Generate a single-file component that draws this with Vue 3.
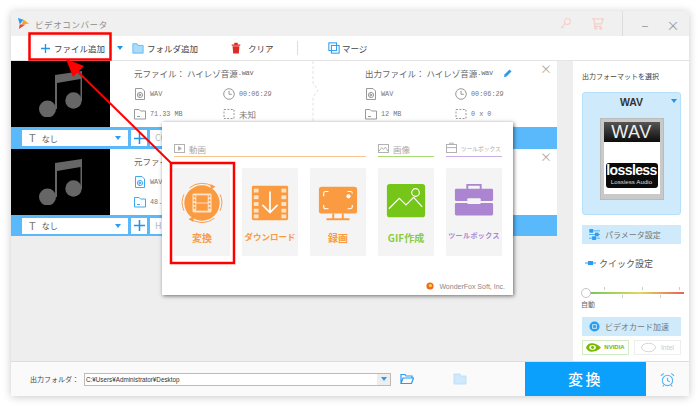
<template>
  <div class="page">
    <div class="window">
      <!-- title bar -->
      <div class="titlebar">
        <svg class="applogo" viewBox="0 0 14 14">
          <path d="M1 1 L7 3 L3 8 Z" fill="#2d9cf0" />
          <path d="M7 3 L13 7 L5 8 Z" fill="#f5a623" />
          <path d="M3 8 L9 8 L2 13 Z" fill="#e8432e" />
        </svg>
        <span class="apptitle">ビデオコンバータ</span>
        <span class="spring"></span>
        <svg class="tico" viewBox="0 0 14 14" fill="none" stroke="#f5cfc9" stroke-width="1.1">
          <circle cx="9" cy="4.8" r="3.2" />
          <path d="M6.8 7 L2 12 M3.5 10.5 L5 12" />
        </svg>
        <svg class="tico cart" viewBox="0 0 14 14" fill="none" stroke="#f5cfc9" stroke-width="1.4">
          <path d="M1 2 H13 L11.5 7.5 H4 L3 2 M4 7.5 V10 H11" />
          <circle cx="5" cy="12" r="1" />
          <circle cx="10.5" cy="12" r="1" />
        </svg>
        <span class="tsep"></span>
        <span class="winbtn">–</span>
        <span class="winbtn">×</span>
      </div>

      <!-- toolbar -->
      <div class="toolbar">
        <div class="tool addfile">
          <svg class="plus" viewBox="0 0 10 10"><path d="M5 0 V10 M0 5 H10" stroke="#1e96e8" stroke-width="1.5" /></svg>
          <span>ファイル追加</span>
        </div>
        <span class="caret toolcaret"></span>
        <div class="tool addfolder">
          <svg class="ticon" viewBox="0 0 14 14">
            <path d="M1 2 H6 L7 4 H13 V13 H1 Z" fill="#a8dcfa" stroke="#3eaaf0" stroke-width=".8" />
          </svg>
          <span>フォルダ追加</span>
        </div>
        <div class="tool clear">
          <svg class="ticon" viewBox="0 0 14 14">
            <path d="M2 3 H12 V4.5 H2 Z M5 1 H9 V3 H5 Z M3 5 H11 L10.3 13.5 H3.7 Z" fill="#dd2a22" />
          </svg>
          <span>クリア</span>
        </div>
        <span class="toolsep"></span>
        <div class="tool merge">
          <svg class="ticon" viewBox="0 0 14 14" fill="none" stroke="#2d9cf0" stroke-width="1.2">
            <rect x="1" y="1" width="9" height="9" />
            <rect x="4" y="4" width="9" height="9" />
          </svg>
          <span>マージ</span>
        </div>
      </div>

      <!-- main area -->
      <div class="main">
        <div class="files">
          <div v-for="(f, i) in files" :key="i" class="fileitem">
            <div class="filerow" :class="{ second: i === 1 }">
              <div class="thumb">
                <svg viewBox="0 0 43 46" class="note">
                  <path d="M16 4 L43 0 V30 H41.5 V8 L18 12 V38 H16 Z" fill="#666" />
                  <circle cx="8.5" cy="38" r="8.5" fill="#666" />
                  <circle cx="34.5" cy="29.5" r="8.2" fill="#666" />
                </svg>
              </div>
              <div class="src">
                <div class="fname"><span>元ファイル： ハイレゾ音源</span><span class="ext">.wav</span></div>
                <div class="meta">
                  <div class="cell first">
                    <svg class="mico" :class="{ on: i === 1 }" viewBox="0 0 12 12" fill="none" stroke="currentColor">
                      <path d="M1.5 .5 H8 L10.5 3 V11.5 H1.5 Z" />
                      <circle cx="6" cy="7" r="2.6" />
                      <path d="M5.2 5.8 L7.2 7 L5.2 8.2 Z" />
                    </svg>
                    <span>WAV</span>
                  </div>
                  <div class="cell">
                    <svg class="mico" viewBox="0 0 12 12" fill="none" stroke="currentColor">
                      <circle cx="6" cy="6" r="5.3" />
                      <path d="M6 2.8 V6.3 H8.8" />
                    </svg>
                    <span>00:06:29</span>
                  </div>
                  <div class="cell first">
                    <svg class="mico" :class="{ on: i === 1 }" viewBox="0 0 12 12" fill="none" stroke="currentColor">
                      <path d="M.5 1.5 H5 L6.5 3 H11.5 V11 H.5 Z" />
                      <path d="M3 8.5 H6" />
                    </svg>
                    <span>{{ f.size }}</span>
                  </div>
                  <div class="cell">
                    <svg class="mico" viewBox="0 0 12 12" fill="none" stroke="currentColor" stroke-dasharray="2 1.4">
                      <rect x="1" y="1.5" width="10" height="9" />
                    </svg>
                    <span class="cjk">未知</span>
                  </div>
                </div>
              </div>
              <div class="arrowcol">
                <svg viewBox="0 0 10 64" class="chev" fill="none" stroke="#e2e2e2">
                  <path d="M1 0 V22 L6 29 L1 36 V64" stroke-dasharray="3 2" />
                </svg>
              </div>
              <div class="out">
                <div class="fname">
                  <span>出力ファイル： ハイレゾ音源</span><span class="ext">.wav</span>
                  <svg class="pencil" viewBox="0 0 10 10"><path d="M1 9 L1.5 6.5 L6.5 1.5 L8.5 3.5 L3.5 8.5 Z" fill="#2a9df0" /></svg>
                </div>
                <div class="meta">
                  <div class="cell outfirst">
                    <svg class="mico" viewBox="0 0 12 12" fill="none" stroke="currentColor">
                      <path d="M1.5 .5 H8 L10.5 3 V11.5 H1.5 Z" />
                      <circle cx="6" cy="7" r="2.6" />
                      <path d="M5.2 5.8 L7.2 7 L5.2 8.2 Z" />
                    </svg>
                    <span>WAV</span>
                  </div>
                  <div class="cell">
                    <svg class="mico" viewBox="0 0 12 12" fill="none" stroke="currentColor">
                      <circle cx="6" cy="6" r="5.3" />
                      <path d="M6 2.8 V6.3 H8.8" />
                    </svg>
                    <span>00:06:29</span>
                  </div>
                  <div class="cell outfirst">
                    <svg class="mico" viewBox="0 0 12 12" fill="none" stroke="currentColor">
                      <path d="M.5 1.5 H5 L6.5 3 H11.5 V11 H.5 Z" />
                      <path d="M3 8.5 H6" />
                    </svg>
                    <span>12 MB</span>
                  </div>
                  <div class="cell">
                    <svg class="mico" viewBox="0 0 12 12" fill="none" stroke="currentColor" stroke-dasharray="2 1.4">
                      <rect x="1" y="1.5" width="10" height="9" />
                    </svg>
                    <span>0 x 0</span>
                  </div>
                </div>
              </div>
              <span class="rowclose">×</span>
            </div>
            <div class="blue" :class="{ short: i === 1 }">
              <div class="sel">
                <span class="tglyph">T</span>
                <span class="none">なし</span>
                <span class="caret selcaret"></span>
              </div>
              <div class="plusbox">
                <svg viewBox="0 0 10 10"><path d="M5 0 V10 M0 5 H10" stroke="#1e96e8" stroke-width="1.4" /></svg>
              </div>
              <div class="ccbox">{{ f.tag }}</div>
            </div>
          </div>
        </div>

        <!-- right panel -->
        <div class="side">
          <div class="sidetitle">出力フォーマットを選択</div>
          <div class="format">
            <div class="fmtname">WAV<span class="caret fmtcaret"></span></div>
            <div class="disk">
              <div class="diskinner">
                <div class="diskhead">WAV</div>
                <div class="badge">
                  <span class="badgebig">lossless</span>
                  <span class="badgesmall">Lossless Audio</span>
                </div>
              </div>
            </div>
          </div>
          <div class="sidebtn">
            <svg class="sico" viewBox="0 0 12 12" stroke="#2a9df0" fill="#2a9df0">
              <path d="M0 2 H12 M0 6 H12 M0 10 H12" stroke-width=".8" />
              <rect x="1" y="0.5" width="3" height="3" />
              <rect x="7" y="4.5" width="3" height="3" />
              <rect x="4" y="8.5" width="3" height="3" />
            </svg>
            <span>パラメータ設定</span>
          </div>
          <div class="quick">
            <svg class="qico" viewBox="0 0 11 6"><path d="M0 3 H11" stroke="#2a9df0" stroke-width="1" /><rect x="3" y="1" width="5" height="4" fill="#2a9df0" /></svg>
            <span>クイック設定</span>
          </div>
          <div class="slider">
            <div class="ticks upper"><i v-for="n in 3" :key="n"></i></div>
            <div class="track"><span class="knob"></span></div>
            <div class="ticks lower"><i v-for="n in 2" :key="n"></i></div>
          </div>
          <div class="auto">自動</div>
          <div class="sidebtn gpu">
            <svg class="sico round" viewBox="0 0 12 12">
              <circle cx="6" cy="6" r="5.5" fill="#2a9df0" />
              <rect x="3.5" y="3.5" width="5" height="5" fill="#cfeafb" />
              <rect x="4.5" y="4.5" width="3" height="3" fill="#2a9df0" />
            </svg>
            <span>ビデオカード加速</span>
          </div>
          <div class="gpubtns">
            <div class="gpubtn nvidia">
              <svg viewBox="0 0 16 11" class="nv">
                <path d="M6 1 C11 1 14 4 16 5.5 C14 7.5 11 10 6 10 C3 10 1 8 0 5.5 C1 3 3 1 6 1 Z" fill="#76b900" />
                <ellipse cx="7" cy="5.5" rx="3.6" ry="2.6" fill="#eef8e0" />
                <circle cx="7" cy="5.5" r="1.5" fill="#76b900" />
              </svg>
              <span>NVIDIA</span>
            </div>
            <div class="gpubtn intel">
              <svg viewBox="0 0 16 11" class="nv" fill="none" stroke="#c8c8c8" stroke-width=".8">
                <ellipse cx="8" cy="5.5" rx="7.5" ry="4.5" />
              </svg>
              <span>Intel</span>
            </div>
          </div>
        </div>
      </div>

      <!-- bottom bar -->
      <div class="bottom">
        <span class="outlabel">出力フォルダ：</span>
        <div class="pathbox">
          <span>C:¥Users¥Administrator¥Desktop</span>
          <span class="pathdrop"><span class="caret"></span></span>
        </div>
        <svg class="bico folder" viewBox="0 0 14 12" fill="none" stroke="#2a9df0" stroke-width="1.2">
          <path d="M1 10.5 V1.5 H5 L6 3 H12 V5 M1 10.5 L3 5 H13.5 L11.5 10.5 Z" />
        </svg>
        <svg class="bico film" viewBox="0 0 14 12" fill="#cfe8fb" stroke="#b5dcf8" stroke-width=".8">
          <path d="M1 1 H7 L8 3 H13 V11 H1 Z" />
        </svg>
        <span class="spring"></span>
        <div class="convert">変換</div>
        <div class="alarm">
          <svg viewBox="0 0 16 16" fill="none" stroke="#57b4f2" stroke-width="1.2">
            <circle cx="8" cy="9" r="5.5" />
            <path d="M8 6 V9 L10.5 10.5 M1 4 L4 1.5 M15 4 L12 1.5 M4 14 L3 15.5 M12 14 L13 15.5" />
          </svg>
        </div>
      </div>

      <!-- popup over the file list -->
      <div class="popup">
        <div class="groups">
          <div v-for="g in groups" :key="g.name" class="group" :class="g.cls">
            <div class="grouphead">
              <svg class="gico" viewBox="0 0 12 10" fill="none" stroke="#aaa">
                <rect x=".5" y=".5" width="11" height="9" />
                <path v-if="g.cls === 'video'" d="M5 3 L8 5 L5 7 Z" fill="#aaa" />
                <path v-else-if="g.cls === 'image'" d="M1 8 L4 4 L6 6 L8 3.5 L11 8" />
                <path v-else d="M4 .5 V-1 H8 V.5 M.5 4 H11.5" />
              </svg>
              <span>{{ g.name }}</span>
            </div>
            <div class="cards">
              <div v-for="c in g.cards" :key="c.label" class="card">
                <svg class="cardicon" viewBox="0 0 44 44" v-html="c.icon"></svg>
                <span class="cardlabel" :class="c.small">{{ c.label }}</span>
              </div>
            </div>
          </div>
        </div>
        <div class="popfoot">
          <svg class="foxlogo" viewBox="0 0 10 10">
            <circle cx="5" cy="5" r="4.5" fill="#ee6a1f" />
            <circle cx="5.5" cy="4.5" r="2" fill="#fbd23c" />
          </svg>
          <span>WonderFox Soft, Inc.</span>
        </div>
      </div>
    </div>

    <!-- red annotation: frames and arrow -->
    <svg class="marks" viewBox="0 0 700 407">
      <rect x="29.5" y="33.5" width="81" height="26" fill="none" stroke="#f00" stroke-width="2.5" />
      <rect x="171" y="163" width="63" height="100" fill="none" stroke="#f00" stroke-width="2.5" />
      <path d="M172 164 L72 66" stroke="#f00" stroke-width="2" />
      <path d="M66 59 L84 66 L73 77 Z" fill="#f00" />
    </svg>
  </div>
</template>

<script setup>
const files = [
  { size: '71.33 MB', tag: 'CC' },
  { size: '48.12 MB', tag: 'H' },
]

const orange = '#fa9a41'
const light = '#fde3c8'

// small squares of a film strip, left and right column
const perfs = (xs, ys, w, h, fill) =>
  xs.flatMap((x) => ys.map((y) => `<rect x="${x}" y="${y}" width="${w}" height="${h}" fill="${fill}"/>`)).join('')

const groups = [
  {
    name: '動画',
    cls: 'video',
    cards: [
      {
        label: '変換',
        icon: `<circle cx="22" cy="22" r="18.5" fill="${orange}"/>
          <path d="M9 6 A21 21 0 0 1 34 5 M35 38 A21 21 0 0 1 9 38 M3 30 A21 21 0 0 1 3 13 M41 13 A21 21 0 0 1 41 30" fill="none" stroke="${orange}" stroke-width="1"/>
          <path d="M31 2 L36 5 L31 8 Z M13 36 L8 39 L13 42 Z" fill="${orange}"/>
          <rect x="12" y="12" width="20" height="20" rx="1.5" fill="${light}"/>
          <rect x="16" y="14" width="12" height="7.5" fill="${orange}"/>
          <rect x="16" y="22.5" width="12" height="7.5" fill="${orange}"/>
          ${perfs([13.2, 29], [14, 18, 22, 26], 1.8, 2, orange)}`,
      },
      {
        label: 'ダウンロード',
        small: 'tight',
        icon: `<rect x="3" y="4" width="38" height="36" rx="1.5" fill="${orange}"/>
          ${perfs([5, 34], [7, 14, 21, 28, 34], 5, 4, light)}
          <path d="M22 10 V32 M14 24 L22 32 L30 24" fill="none" stroke="#fff" stroke-width="1.8"/>`,
      },
      {
        label: '録画',
        icon: `<rect x="2" y="5" width="40" height="28" rx="3" fill="${orange}"/>
          <path d="M7 15 V12 Q7 10 9 10 H12 M32 10 H35 Q37 10 37 12 M37 24 V26 Q37 28 35 28 H32 M12 28 H9 Q7 28 7 26 V24" fill="none" stroke="#fff" stroke-width="1.2"/>
          <circle cx="33" cy="15" r="2.2" fill="#fff"/>
          <path d="M17 33 V38 M27 33 V38 M10 39 H34" stroke="${orange}" stroke-width="2"/>`,
      },
    ],
  },
  {
    name: '画像',
    cls: 'image',
    cards: [
      {
        label: 'GIF作成',
        icon: `<rect x="2" y="2" width="40" height="35" rx="3" fill="#76c61a"/>
          <circle cx="32" cy="11" r="4" fill="none" stroke="#fff" stroke-width="1.2"/>
          <path d="M4 28 L15 17 L22 24 L30 16 L39 26" fill="none" stroke="#fff" stroke-width="1.2"/>`,
      },
    ],
  },
  {
    name: 'ツールボックス',
    cls: 'tools',
    cards: [
      {
        label: 'ツールボックス',
        small: 'tiny',
        icon: `<path d="M15 8 V3 H29 V8" fill="none" stroke="#ab84d2" stroke-width="2"/>
          <rect x="2" y="7" width="40" height="13" rx="1.5" fill="#ab84d2"/>
          <rect x="2" y="22" width="40" height="13" rx="1.5" fill="#ab84d2"/>
          <rect x="15" y="17" width="14" height="6" rx="1" fill="#f4f4f4"/>`,
      },
    ],
  },
]
</script>

<style>
html,
body {
  margin: 0;
  background: #fff;
}
</style>

<style scoped>
.page {
  position: relative;
  width: 700px;
  height: 407px;
  padding: 11px;
  box-sizing: border-box;
  overflow: hidden;
  font-family: "Noto Sans CJK JP", "Noto Sans", sans-serif;
  font-size: 9px;
  color: #555;
}

.window {
  position: relative;
  width: 678px;
  height: 385px;
  display: flex;
  flex-direction: column;
  background: #eee;
  border-radius: 2px;
  box-shadow: 0 1px 9px rgba(0, 0, 0, 0.22);
}

.spring {
  flex: 1;
}

/* title bar */
.titlebar {
  height: 25px;
  display: flex;
  align-items: center;
  background: #f0f0f0;
  padding-left: 6px;
  padding-right: 2px;
}

.applogo {
  width: 13px;
  height: 13px;
}

.apptitle {
  margin-left: 5px;
  font-size: 8.5px;
  letter-spacing: 0.6px;
  color: #8c8c8c;
}

.tico {
  width: 13px;
  height: 13px;
  margin-right: 19px;
}

.tico.cart {
  margin-right: 18px;
}

.tsep {
  width: 1px;
  height: 25px;
  background: #ddd;
  margin-right: 8px;
}

.winbtn {
  width: 28px;
  text-align: center;
  font-size: 13px;
  color: #999;
  padding-top: 2px;
}

/* toolbar */
.toolbar {
  height: 24px;
  display: flex;
  align-items: center;
  background: #fff;
  border-bottom: 1px solid #e4e4e4;
  font-size: 8.5px;
  color: #444;
}

.tool {
  display: flex;
  align-items: center;
  white-space: nowrap;
}

.addfile {
  margin-left: 30px;
  width: 74px;
}

.plus {
  width: 9px;
  height: 9px;
  margin-right: 4px;
}

.ticon {
  width: 12px;
  height: 12px;
  margin-right: 3px;
}

.caret {
  display: inline-block;
  width: 0;
  height: 0;
  border-left: 4px solid transparent;
  border-right: 4px solid transparent;
  border-top: 4px solid #1e96e8;
}

.toolcaret {
  margin-left: 2px;
  margin-right: 9px;
  border-left-width: 3px;
  border-right-width: 3px;
}

.addfolder {
  width: 100px;
}

.clear {
  width: 65px;
}

.clear .ticon {
  margin-left: -2px;
  margin-right: 6px;
}

.toolsep {
  width: 1px;
  height: 14px;
  background: #ddd;
  margin-right: 30px;
}

.merge .ticon {
  margin-right: 2px;
}

/* file list */
.main {
  flex: 1;
  min-height: 0;
  display: flex;
  justify-content: space-between;
}

.files {
  width: 546px;
}

.filerow {
  height: 66px;
  display: flex;
  position: relative;
  background: #fff;
  font-size: 8.5px;
  color: #666;
}

.thumb {
  flex: none;
  width: 99px;
  background: #000;
  display: flex;
  align-items: center;
  justify-content: center;
}

.note {
  width: 43px;
  height: 46px;
}

.src {
  flex: none;
  width: 177px;
  padding: 5px 0 0 24px;
  box-sizing: border-box;
}

.fname {
  display: flex;
  align-items: center;
  white-space: pre;
  height: 14px;
}

.ext {
  font-family: "Liberation Mono", monospace;
  font-size: 7px;
  letter-spacing: -0.3px;
}

.pencil {
  width: 10px;
  height: 10px;
  margin-left: 10px;
}

.meta {
  display: grid;
  grid-template-columns: auto auto;
  justify-content: start;
  row-gap: 6px;
  margin-top: 7px;
}

.cell {
  display: flex;
  align-items: center;
  height: 14px;
  font-family: "Liberation Mono", monospace;
  font-size: 6.8px;
  color: #777;
}

.cell .cjk {
  font-family: "Noto Sans CJK JP", sans-serif;
  font-size: 8.5px;
}

.cell.first {
  width: 89px;
}

.cell.outfirst {
  width: 90px;
}

.mico {
  width: 12px;
  height: 12px;
  margin-right: 4px;
  color: #999;
}

.mico.on {
  color: #3eaaf0;
}

.arrowcol {
  flex: none;
  width: 78px;
  padding-left: 25px;
  box-sizing: border-box;
  display: flex;
}

.chev {
  width: 10px;
  height: 64px;
}

.out {
  flex: none;
  width: 180px;
  padding: 5px 0 0 0;
  box-sizing: border-box;
}

.rowclose {
  position: absolute;
  top: -1px;
  right: 5px;
  font-size: 12px;
  color: #aaa;
}

.blue {
  height: 22px;
  display: flex;
  align-items: center;
  background: #5ab9fb;
  padding-left: 11px;
}

.blue.short {
  height: 21px;
}

.sel {
  width: 106px;
  height: 16px;
  display: flex;
  align-items: center;
  background: #fff;
  padding: 0 7px;
  box-sizing: border-box;
}

.tglyph {
  font-family: "Liberation Sans", sans-serif;
  font-size: 11px;
  color: #777;
  margin-right: 6px;
}

.none {
  flex: 1;
  font-size: 8px;
  color: #555;
}

.selcaret {
  border-left-width: 3.5px;
  border-right-width: 3.5px;
  border-top-color: #2a9df0;
}

.plusbox {
  width: 16px;
  height: 16px;
  margin-left: 3px;
  background: #fff;
  display: flex;
  align-items: center;
  justify-content: center;
}

.plusbox svg {
  width: 11px;
  height: 11px;
}

.ccbox {
  width: 60px;
  height: 16px;
  margin-left: 3px;
  padding-left: 5px;
  background: #fff;
  color: #bbb;
  font-size: 9px;
  line-height: 16px;
  box-sizing: border-box;
}

/* right panel */
.side {
  width: 116px;
  padding: 8px 8px 0 9px;
  box-sizing: border-box;
  background: #fff;
  display: flex;
  flex-direction: column;
}

.side > * {
  flex: none;
}

.sidetitle {
  height: 14px;
  line-height: 14px;
  font-size: 7px;
  color: #444;
  white-space: nowrap;
}

.format {
  margin-top: 9px;
  height: 123px;
  background: #cfeafb;
  border: 1px solid #b5e0fb;
  border-radius: 3px;
  box-sizing: border-box;
}

.fmtname {
  position: relative;
  text-align: center;
  font-family: "Liberation Sans", sans-serif;
  font-size: 10.5px;
  font-weight: 700;
  color: #333;
  line-height: 14px;
  padding-top: 2px;
}

.fmtcaret {
  position: absolute;
  top: 6px;
  right: 3px;
  border-left-width: 3.5px;
  border-right-width: 3.5px;
}

.disk {
  margin: 9px auto 0;
  width: 64px;
  height: 82px;
  background: #c9c9c9;
  padding: 3px 3px 5px;
  box-sizing: border-box;
  border: 1px solid #bbb;
}

.diskinner {
  height: 100%;
  background: #fff;
  display: flex;
  flex-direction: column;
  align-items: center;
}

.diskhead {
  width: 100%;
  height: 20px;
  background: linear-gradient(#555, #0c0c0c);
  color: #eee;
  font-family: "Liberation Sans", sans-serif;
  font-size: 18px;
  line-height: 20px;
  text-align: center;
  letter-spacing: 0.5px;
}

.badge {
  width: 52px;
  height: 25px;
  margin-top: 21px;
  background: #0b0b0b;
  border-radius: 3px;
  display: flex;
  flex-direction: column;
  align-items: center;
  color: #fff;
  font-family: "Liberation Sans", sans-serif;
  line-height: 1;
}

.badgebig {
  font-size: 14px;
  font-weight: 700;
  letter-spacing: -0.6px;
}

.badgesmall {
  font-size: 6.2px;
  margin-top: 2px;
  color: #ddd;
  white-space: nowrap;
}

.sidebtn {
  margin-top: 10px;
  height: 19px;
  background: #cfeafb;
  display: flex;
  align-items: center;
  padding-left: 7px;
  font-size: 8px;
  color: #777;
}

.sico {
  width: 11px;
  height: 11px;
  margin-right: 5px;
}

.quick {
  margin-top: 11px;
  height: 16px;
  display: flex;
  align-items: center;
  padding-left: 3px;
  font-size: 9px;
  color: #555;
}

.qico {
  width: 11px;
  height: 6px;
  margin-right: 3px;
}

.slider {
  margin: 15px -3px 0 3px;
}

.ticks {
  display: flex;
  justify-content: space-between;
  height: 3px;
  margin-top: 1px;
}

.ticks i {
  width: 1px;
  background: #ccc;
}

.ticks.upper {
  margin-left: 19px;
  padding-right: 4px;
}

.ticks.lower {
  margin: 1px 23px 0 37px;
}

.track {
  position: relative;
  height: 1.5px;
  margin-top: 2px;
  background: linear-gradient(90deg, #69c75d, #e4d75a 55%, #e8625a);
}

.knob {
  position: absolute;
  left: -4px;
  top: -4px;
  width: 8px;
  height: 8px;
  border-radius: 50%;
  background: #fff;
  border: 1px solid #c4c4c4;
}

.auto {
  height: 12px;
  line-height: 12px;
  margin-left: -1px;
  font-size: 7px;
  color: #666;
}

.sidebtn.gpu {
  margin-top: 7px;
}

.gpubtns {
  display: flex;
  justify-content: space-between;
  margin-top: 4px;
}

.gpubtn {
  width: 47px;
  height: 15px;
  box-sizing: border-box;
  display: flex;
  align-items: center;
  justify-content: center;
  gap: 3px;
  border: 1px solid #d4ecc4;
  font-family: "Liberation Sans", sans-serif;
  font-size: 6px;
  font-weight: 700;
  color: #76b900;
}

.gpubtn.intel {
  border-color: #eee;
  color: #ccc;
  font-size: 7px;
  font-weight: 400;
  gap: 5px;
}

.nv {
  width: 15px;
  height: 11px;
}

/* bottom bar */
.bottom {
  height: 35px;
  flex: none;
  box-sizing: border-box;
  border-top: 1px solid #ddd;
  background: #fafafa;
  display: flex;
  align-items: center;
  padding-left: 19px;
}

.outlabel {
  width: 54px;
  font-size: 7px;
  color: #444;
  white-space: nowrap;
}

.pathbox {
  width: 307px;
  height: 13px;
  box-sizing: border-box;
  border: 1px solid #bbb;
  background: #fff;
  display: flex;
  align-items: center;
  justify-content: space-between;
  font-family: "Liberation Sans", sans-serif;
  font-size: 6.3px;
  color: #333;
  padding-left: 1px;
}

.pathdrop {
  width: 13px;
  height: 11px;
  background: #eee;
  display: flex;
  align-items: center;
  justify-content: center;
}

.pathdrop .caret {
  border-left-width: 3.5px;
  border-right-width: 3.5px;
  border-top-color: #2a9df0;
}

.bico {
  width: 14px;
  height: 12px;
}

.bico.folder {
  margin-left: 9px;
}

.bico.film {
  margin-left: 39px;
}

.convert {
  width: 121px;
  height: 34px;
  background: #0aa0fb;
  color: #fff;
  font-size: 15px;
  font-weight: 500;
  letter-spacing: 2.5px;
  text-align: center;
  line-height: 34px;
}

.alarm {
  width: 43px;
  display: flex;
  justify-content: center;
}

.alarm svg {
  width: 15px;
  height: 15px;
}

/* popup */
.popup {
  position: absolute;
  left: 151px;
  top: 111px;
  width: 351px;
  height: 173px;
  background: #fff;
  box-shadow: 1px 1px 4px rgba(0, 0, 0, 0.55);
  padding: 19px 11px 0 12px;
  box-sizing: border-box;
}

.groups {
  display: flex;
  gap: 12px;
}

.grouphead {
  height: 15px;
  display: flex;
  align-items: center;
  gap: 4px;
  font-size: 8.5px;
  color: #aaa;
  white-space: nowrap;
  border-bottom: 1px solid;
  margin-bottom: 11px;
}

.video .grouphead {
  border-color: #fbc48e;
}

.image .grouphead {
  border-color: #a8dc72;
}

.tools .grouphead {
  border-color: #c8aee4;
  font-size: 5.7px;
}

.gico {
  width: 11px;
  height: 9px;
  flex: none;
  overflow: visible;
}

.cards {
  display: flex;
  gap: 12px;
}

.card {
  width: 56px;
  height: 88px;
  background: #f4f4f4;
  border-radius: 2px;
  display: flex;
  flex-direction: column;
  align-items: center;
  padding-top: 14px;
  box-sizing: border-box;
}

.cardicon {
  width: 42px;
  height: 42px;
}

.cardlabel {
  margin-top: 6px;
  font-size: 10px;
  font-weight: 700;
  white-space: nowrap;
}

.cardlabel.tight {
  font-size: 8.5px;
}

.cardlabel.tiny {
  font-size: 7px;
  letter-spacing: 0.4px;
}

.video .cardlabel {
  color: #fa9a41;
}

.image .cardlabel {
  color: #8ccc3c;
}

.tools .cardlabel {
  color: #ab84d2;
}

.popfoot {
  margin-top: 26px;
  margin-right: -3px;
  display: flex;
  align-items: center;
  justify-content: flex-end;
  gap: 5px;
  font-family: "Liberation Sans", sans-serif;
  font-size: 7px;
  color: #888;
}

.foxlogo {
  width: 8px;
  height: 8px;
}

/* annotation layer */
.marks {
  position: absolute;
  left: 0;
  top: 0;
  width: 700px;
  height: 407px;
  pointer-events: none;
}
</style>
